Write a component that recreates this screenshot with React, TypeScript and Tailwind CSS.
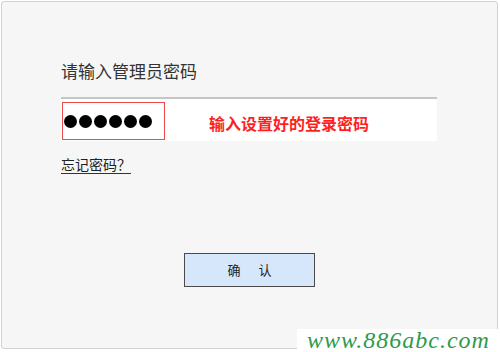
export default function App() {
  const dots = [0, 1, 2, 3, 4, 5];
  return (
    <div
      className="relative w-[500px] h-[352px] bg-white overflow-hidden"
      style={{ fontFamily: '"Noto Sans CJK SC", "Liberation Sans", sans-serif' }}
    >
      <div className="ml-px mt-px w-[497px] h-[348px] border border-[#d2d2d2] rounded-[3px] bg-[#f6f6f6] flex flex-col">
        <div className="pl-[59px] pt-[58px]">
          <p className="text-[17px] leading-[22px] text-[#333]">请输入管理员密码</p>

          <div className="mt-[15px] w-[376px] h-[44px] bg-white border-t-2 border-[#c6c6c6] flex items-start">
            <div className="ml-px mt-[3px] w-[103px] h-[38px] border border-[#e94b4b] flex items-center gap-[2px] pl-[1px]">
              {dots.map((d) => (
                <span key={d} className="w-[13px] h-[13px] rounded-full bg-black" />
              ))}
            </div>
            <span className="ml-[44px] mt-[15px] text-[16px] leading-[18px] font-bold text-[#ff1f1f]">
              输入设置好的登录密码
            </span>
          </div>

          <p className="mt-[15px] text-[14px] leading-[16px] text-[#222] underline underline-offset-[3px] decoration-[#333]">
            忘记密码？
          </p>
        </div>

        <div className="mt-[81px] flex justify-center">
          <button className="w-[131px] h-[34px] bg-[#d6e6fb] border-[1.5px] border-[#4a4a4a] text-[13px] text-[#222] tracking-[0]">
            确<span className="inline-block w-[18px]" />认
          </button>
        </div>
      </div>

      <div className="absolute right-0 bottom-0 w-[203px] h-[23px] bg-white flex items-end justify-center">
        <span
          className="italic text-[24px] leading-[24px] text-[#2e9a4e] tracking-[1px]"
          style={{ fontFamily: '"Liberation Serif", "DejaVu Serif", serif' }}
        >
          www.886abc.com
        </span>
      </div>
    </div>
  );
}
